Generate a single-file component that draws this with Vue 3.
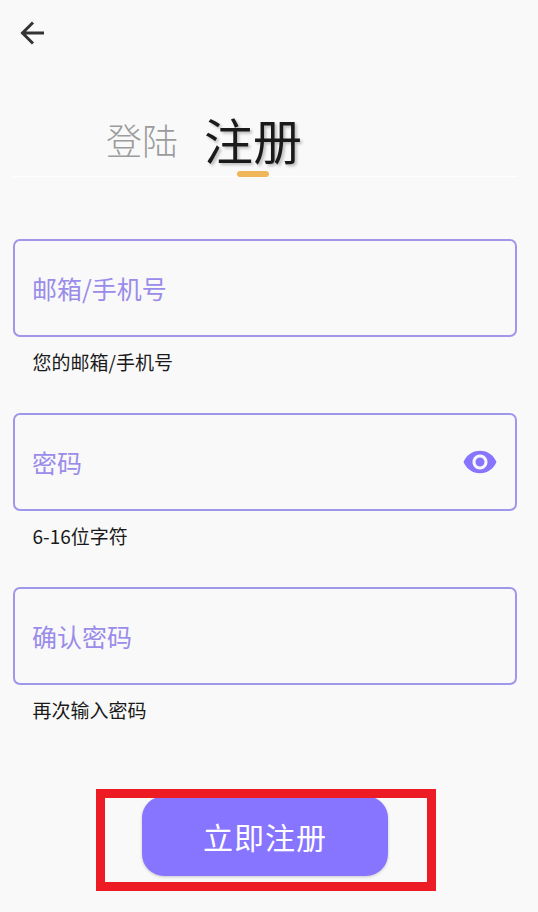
<script setup>
const fields = [
  { label: '邮箱/手机号', help: '您的邮箱/手机号', eye: false },
  { label: '密码', help: '6-16位字符', eye: true },
  { label: '确认密码', help: '再次输入密码', eye: false },
]
</script>

<template>
  <div class="page">
    <button class="back" aria-label="返回">
      <svg width="28" height="28" viewBox="0 0 28 28" fill="none" stroke="#333" stroke-width="3">
        <path d="M25 14H3.5M14 3.5 3.5 14 14 24.500" />
      </svg>
    </button>

    <div class="tabs">
      <span class="tab">登陆</span>
      <span class="tab active">注册<i class="indicator"></i></span>
    </div>

    <form class="form" @submit.prevent>
      <div v-for="f in fields" :key="f.label" class="group">
        <div class="field">
          <span class="label">{{ f.label }}</span>
          <svg v-if="f.eye" class="eye" width="36" height="36" viewBox="0 0 24 24">
            <path fill="#8875ff" d="M12 4.5C7 4.5 2.73 7.61 1 12c1.73 4.39 6 7.500 11 7.500s9.270-3.110 11-7.500c-1.730-4.390-6-7.500-11-7.500zM12 17c-2.760 0-5-2.240-5-5s2.240-5 5-5 5 2.240 5 5-2.240 5-5 5zm0-8c-1.660 0-3 1.340-3 3s1.340 3 3 3 3-1.340 3-3-1.340-3-3-3z" />
          </svg>
        </div>
        <p class="help">{{ f.help }}</p>
      </div>
      <div class="actions">
        <button class="submit">立即注册</button>
      </div>
    </form>

    <div class="highlight"></div>
  </div>
</template>

<style scoped>
.page {
  position: relative;
  width: 538px;
  height: 912px;
  box-sizing: border-box;
  padding: 19px 21px 0 13px;
  background: #f9f9f9;
  overflow: hidden;
  font-family: "Noto Sans CJK SC", "Noto Sans", sans-serif;
}
.back {
  display: block;
  width: 28px;
  height: 28px;
  margin-left: 6px;
  padding: 0;
  border: 0;
  background: none;
}
.back svg { display: block; }
.tabs {
  display: flex;
  align-items: flex-end;
  gap: 26px;
  height: 130px;
  box-sizing: border-box;
  padding-left: 93px;
  border-bottom: 1px solid #ffffff;
}
.tab {
  position: relative;
  font-size: 36px;
  line-height: 50px;
  padding-bottom: 12px;
  color: #9c9c9c;
  font-weight: 300;
}
.active {
  font-size: 49px;
  line-height: 60px;
  padding-bottom: 7px;
  color: #1a1a1a;
  font-weight: 400;
  text-shadow: 2px 2px 3px rgba(0, 0, 0, 0.25);
}
.indicator {
  position: absolute;
  left: 33px;
  bottom: -1px;
  width: 32px;
  height: 6px;
  border-radius: 3px;
  background: #f0b65a;
}
.form {
  display: flex;
  flex-direction: column;
  padding-top: 62px;
}
.group {
  height: 174px;
}
.field {
  display: flex;
  align-items: center;
  justify-content: space-between;
  width: 504px;
  height: 98px;
  box-sizing: border-box;
  padding: 0 17px;
  border: 2px solid #a096ea;
  border-radius: 7px;
}
.label {
  font-size: 25px;
  color: #9a8cea;
}
.eye {
  display: block;
}
.help {
  margin: 13px 0 0 19.5px;
  font-size: 19px;
  line-height: 24px;
  color: #1a1a1a;
}
.actions {
  display: flex;
  justify-content: center;
  padding-top: 35px;
}
.submit {
  width: 246px;
  height: 80px;
  border: 0;
  border-radius: 22px;
  background: #8875ff;
  color: #fff;
  font-family: inherit;
  font-size: 30px;
  letter-spacing: 1px;
  box-shadow: 0 1px 3px rgba(0, 0, 0, 0.2);
}
.highlight {
  position: absolute;
  left: 96px;
  top: 789px;
  width: 340px;
  height: 102px;
  box-sizing: border-box;
  border: 9px solid #ed1c24;
  pointer-events: none;
}
</style>
